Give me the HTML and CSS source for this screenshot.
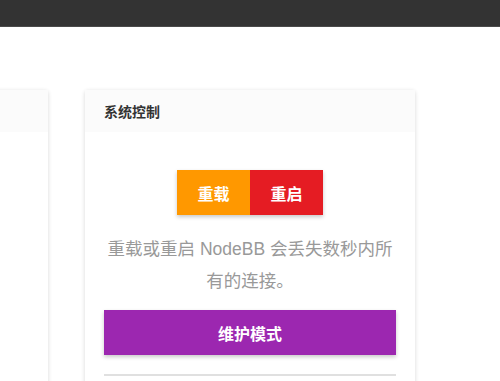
FILE: index.html
```html
<!DOCTYPE html>
<html lang="zh-CN">

<head>
    <meta charset="UTF-8">
    <meta name="viewport" content="width=device-width, initial-scale=1.0">
    <title>系统控制</title>
    <link rel="stylesheet" href="styles.css">
</head>

<body>
    <div class="navbar"></div>

    <div class="content">
        <div class="row">
            <div class="card card-side">
                <div class="card-header"></div>
            </div>

            <div class="card card-main">
                <div class="card-header">系统控制</div>
                <div class="card-body">
                    <div class="btn-group">
                        <button class="btn btn-warning">重载</button>
                        <button class="btn btn-danger">重启</button>
                    </div>
                    <p class="help-text">重载或重启 NodeBB 会丢失数秒内所有的连接。</p>
                    <button class="btn btn-primary btn-block">维护模式</button>
                    <hr class="divider">
                </div>
            </div>
        </div>
    </div>
</body>

</html>
```

FILE: styles.css
```css
body {
    font-family: "Liberation Sans", "Noto Sans CJK SC", sans-serif;
    background-color: #fff;
    margin: 0;
    padding: 0;
    height: 381px;
    overflow: hidden;
}

.navbar {
    height: 27px;
    background-color: #333;
    border-bottom: 1px solid #4a4a4a;
    box-sizing: border-box;
}

.content {
    height: 354px;
    padding-top: 63px;
    box-sizing: border-box;
    overflow: hidden;
}

.row {
    display: flex;
    gap: 37px;
    margin-left: -152px;
}

.card {
    background-color: #fff;
    border-radius: 3px;
    box-shadow: 0 1px 4px rgba(0, 0, 0, 0.16);
    height: 310px;
}

.card-side {
    width: 200px;
}

.card-main {
    width: 330px;
}

.card-header {
    height: 42px;
    background-color: #fbfbfb;
    padding: 0 19px;
    font-size: 14px;
    font-weight: bold;
    color: #333;
    display: flex;
    align-items: center;
}

.card-body {
    padding: 38px 19px 0;
    text-align: center;
}

.btn-group {
    display: flex;
    justify-content: center;
    box-shadow: 0 2px 4px rgba(0, 0, 0, 0.22);
    width: fit-content;
    margin: 0 auto;
}

.btn {
    border: none;
    color: #fff;
    font-family: "Liberation Sans", "Noto Sans CJK SC", sans-serif;
    font-size: 16px;
    font-weight: bold;
    height: 45px;
    cursor: pointer;
}

.btn-warning {
    background-color: #ff9800;
    width: 73px;
}

.btn-danger {
    background-color: #e51c23;
    width: 73px;
}

.help-text {
    color: #999;
    font-size: 17.5px;
    line-height: 32px;
    margin: 18px 0 13px;
}

.btn-primary {
    background-color: #9c27b0;
    box-shadow: 0 2px 4px rgba(0, 0, 0, 0.22);
}

.btn-block {
    display: block;
    width: 100%;
}

.divider {
    border: none;
    border-top: 2px solid #e0e0e0;
    margin: 19px 0 0;
}
```
